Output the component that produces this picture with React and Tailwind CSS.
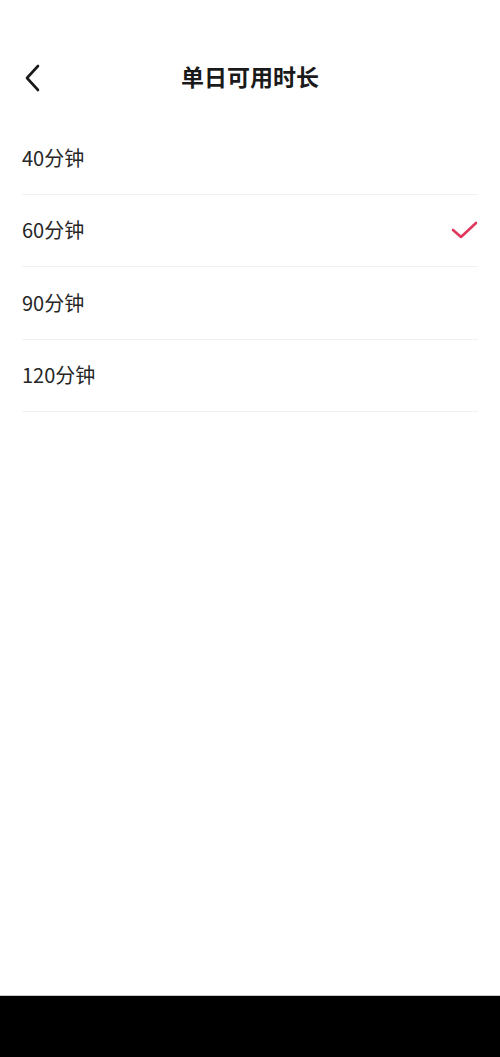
const OPTIONS = ['40分钟', '60分钟', '90分钟', '120分钟']

export default function App() {
  const selected = '60分钟'

  return (
    <div
      className="flex h-[1057px] w-[500px] flex-col bg-white"
      style={{ fontFamily: '"Noto Sans CJK SC", "Noto Sans", sans-serif' }}
    >
      {/* Header */}
      <div className="relative h-[122px] shrink-0">
        <button className="absolute left-[17px] top-[62px] flex h-8 w-8 items-center justify-center">
          <svg width="24" height="30" viewBox="0 0 24 30" fill="none" stroke="#1a1a1a" strokeWidth="2.6" strokeLinecap="round" strokeLinejoin="round">
            <polyline points="17 3 6 15 17 27" />
          </svg>
        </button>
        <h1 className="absolute left-0 right-0 top-[60px] text-center text-[23px] font-bold leading-8 text-[#1a1a1a]">
          单日可用时长
        </h1>
      </div>

      {/* Options */}
      <div className="flex-1 px-[22px]">
        {OPTIONS.map(opt => (
          <div key={opt} className="flex h-[72.5px] items-center justify-between border-b border-[#f0f0f0]">
            <span className="text-[20px] text-[#262626]">{opt}</span>
            {opt === selected && (
              <svg width="28" height="22" viewBox="0 0 28 22" fill="none" stroke="#e0385c" strokeWidth="2.6" strokeLinecap="round" strokeLinejoin="round">
                <polyline points="3 11 11 18 26 4" />
              </svg>
            )}
          </div>
        ))}
      </div>

      {/* Navigation bar */}
      <div className="h-[62px] shrink-0 border-t border-[#c8c8c8] bg-black" />
    </div>
  )
}
